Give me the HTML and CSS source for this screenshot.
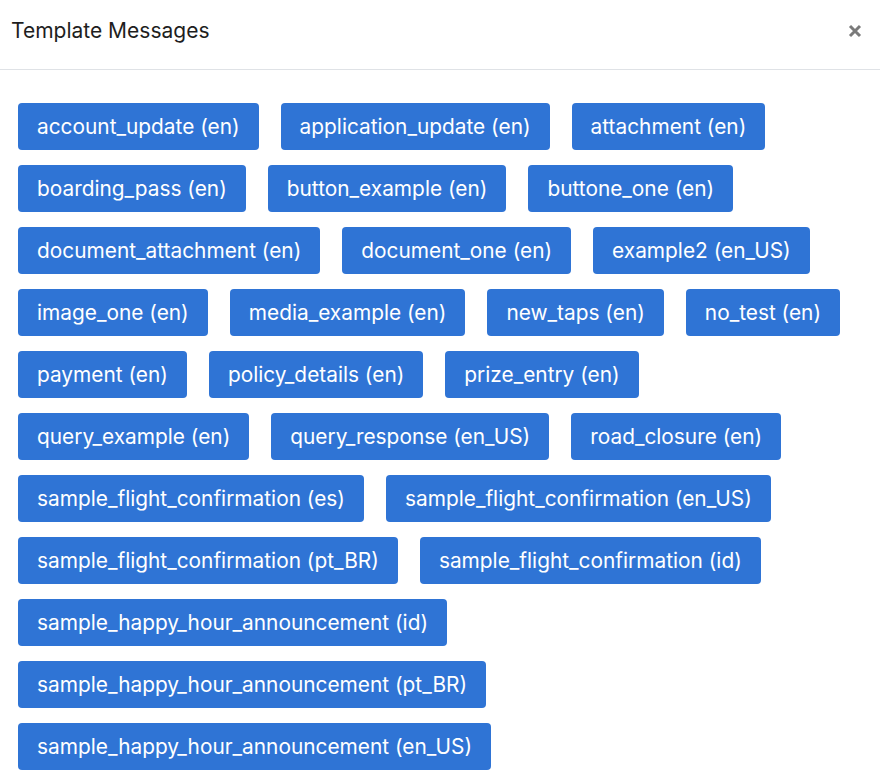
FILE: index.html
```html
<!DOCTYPE html>
<html>
<head>
<meta charset="utf-8">
<link rel="stylesheet" href="styles.css">
</head>
<body>
<div class="modal">
  <div class="header">
    <div class="title">Template Messages</div>
    <button class="close" aria-label="Close">
      <svg width="14" height="14" viewBox="0 0 14 14"><path d="M2 2 L12 12 M12 2 L2 12" stroke="#7a7a7a" stroke-width="3" stroke-linecap="butt"/></svg>
    </button>
  </div>
  <div class="body">
    <span class="tpl">account_update (en)</span>
    <span class="tpl">application_update (en)</span>
    <span class="tpl">attachment (en)</span>
    <span class="tpl">boarding_pass (en)</span>
    <span class="tpl">button_example (en)</span>
    <span class="tpl">buttone_one (en)</span>
    <span class="tpl">document_attachment (en)</span>
    <span class="tpl">document_one (en)</span>
    <span class="tpl">example2 (en_US)</span>
    <span class="tpl">image_one (en)</span>
    <span class="tpl">media_example (en)</span>
    <span class="tpl">new_taps (en)</span>
    <span class="tpl">no_test (en)</span>
    <span class="tpl">payment (en)</span>
    <span class="tpl">policy_details (en)</span>
    <span class="tpl">prize_entry (en)</span>
    <span class="tpl">query_example (en)</span>
    <span class="tpl">query_response (en_US)</span>
    <span class="tpl">road_closure (en)</span>
    <span class="tpl">sample_flight_confirmation (es)</span>
    <span class="tpl">sample_flight_confirmation (en_US)</span>
    <span class="tpl">sample_flight_confirmation (pt_BR)</span>
    <span class="tpl">sample_flight_confirmation (id)</span>
    <span class="tpl">sample_happy_hour_announcement (id)</span>
    <span class="tpl">sample_happy_hour_announcement (pt_BR)</span>
    <span class="tpl">sample_happy_hour_announcement (en_US)</span>
  </div>
</div>
</body>
</html>
```

FILE: styles.css
```css
* { box-sizing: border-box; }
html, body { margin: 0; padding: 0; background: #fff; }
body { font-family: Inter, "Noto Sans", sans-serif; }
.modal { width: 880px; }
.header {
  height: 70px;
  border-bottom: 1px solid #dfe2e6;
  display: flex;
  align-items: center;
  justify-content: space-between;
  padding: 0 18px 0 11px;
}
.title { font-size: 21px; color: #1e1e1e; padding-bottom: 8px; }
.close {
  border: 0; background: none; padding: 0; margin: 0 0 8px 0;
  width: 14px; height: 14px; display: flex; cursor: pointer;
}
.body {
  padding: 33px 18px 0 18px;
  display: flex;
  flex-wrap: wrap;
  column-gap: 22px;
  row-gap: 15px;
}
.tpl {
  background: #2f74d5;
  color: #fff;
  font-size: 20.85px;
  height: 47px;
  line-height: 47px;
  padding: 0 19px;
  border-radius: 4px;
  white-space: nowrap;
}
```
